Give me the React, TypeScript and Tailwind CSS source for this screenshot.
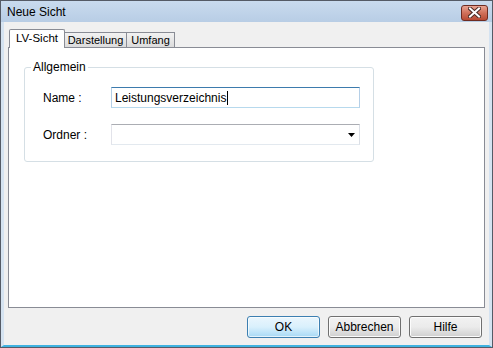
import React from "react";

const font = { fontFamily: "'Liberation Sans', Arial, sans-serif" };

function Btn({ label, def }: { label: string; def?: boolean }) {
  return (
    <div
      className={
        "w-[73px] h-[22px] rounded-[3px] border flex items-center justify-center text-[12px] text-black " +
        (def
          ? "border-[#3c7fb1] bg-gradient-to-b from-[#eaf6fd] via-[#d9f0fc] to-[#a7d9f5] shadow-[inset_0_0_0_1px_#ffffffaa]"
          : "border-[#707070] bg-gradient-to-b from-[#f2f2f2] via-[#ebebeb] to-[#cfcfcf] shadow-[inset_0_0_0_1px_#fcfcfc]")
      }
    >
      {label}
    </div>
  );
}

export default function App() {
  return (
    <div
      className="w-[493px] h-[348px] flex flex-col bg-[#f0f0f0] border border-[#555b66] overflow-hidden"
      style={font}
    >
      {/* title bar */}
      <div className="h-[21px] shrink-0 flex items-center justify-between pl-[6px] pr-[4px] bg-gradient-to-b from-[#c9dbee] to-[#b8cde5]">
        <span className="text-[12px] text-black">Neue Sicht</span>
        <div className="w-[27px] h-[16px] mt-[2px] rounded-[3px] border border-[#6d2c22] bg-gradient-to-b from-[#e8a493] via-[#d0705a] to-[#b84a34] flex items-center justify-center">
          <svg width="13" height="11" viewBox="0 0 13 11">
            <path d="M2 1.5 L11 9.5 M11 1.5 L2 9.5" stroke="#4a2a25" strokeWidth="4" strokeLinecap="square" />
            <path d="M2 1.5 L11 9.5 M11 1.5 L2 9.5" stroke="#ffffff" strokeWidth="2" strokeLinecap="square" />
          </svg>
        </div>
      </div>

      {/* client */}
      <div className="flex-1 flex flex-col border-l-[3px] border-r-[3px] border-b-[2px] border-l-[#d5e3f1] border-r-[#d5e3f1] border-b-[#3fb2e0] px-[4px]">
        {/* tabs */}
        <div className="flex items-end h-[25px] pl-[1px] pt-[7px]">
          <div className="relative z-10 w-[56px] h-[19px] -mb-[1px] bg-white border border-b-0 border-[#898c95] rounded-t-[2px] flex items-center justify-center text-[11.5px] text-black">
            LV-Sicht
          </div>
          <div className="w-[62px] h-[15px] bg-gradient-to-b from-[#f2f2f2] to-[#dcdcdc] border border-b-0 border-l-0 border-[#898c95] flex items-center justify-center text-[11px] text-black">
            Darstellung
          </div>
          <div className="w-[48px] h-[15px] bg-gradient-to-b from-[#f2f2f2] to-[#dcdcdc] border border-b-0 border-l-0 border-[#898c95] flex items-center justify-center text-[11px] text-black">
            Umfang
          </div>
        </div>
        {/* panel */}
        <div className="h-[261px] bg-white border border-[#898c95] pt-[19px] pl-[15px]">
          <div className="relative w-[350px] h-[95px] border border-[#d5dfe5] rounded-[3px] pt-[19px] pl-[18px]">
            <span className="absolute -top-[7px] left-[6px] bg-white px-[2px] text-[12px] text-black leading-[13px]">
              Allgemein
            </span>
            <div className="flex items-center h-[21px]">
              <span className="w-[68px] text-[12px] text-black">Name :</span>
              <div className="w-[249px] h-[21px] border border-[#3d7bad] border-b-[#b7d9ed] border-l-[#b5cfe7] border-r-[#b5cfe7] flex items-center pl-[3px] text-[12px] text-black">
                Leistungsverzeichnis<span className="inline-block w-[1px] h-[14px] bg-black ml-[1px]" />
              </div>
            </div>
            <div className="flex items-center h-[21px] mt-[16px]">
              <span className="w-[68px] text-[12px] text-black">Ordner :</span>
              <div className="w-[249px] h-[21px] border border-[#abadb3] border-b-[#e3e9ef] border-l-[#e2e3ea] border-r-[#dbdfe6] flex items-center justify-end pr-[4px]">
                <svg width="7" height="4" viewBox="0 0 7 4">
                  <path d="M0 0 H7 L3.5 4 Z" fill="#000" />
                </svg>
              </div>
            </div>
          </div>
        </div>
        {/* buttons */}
        <div className="flex-1 flex items-center justify-end gap-[8px] pr-[3px] pt-[1px]">
          <Btn label="OK" def />
          <Btn label="Abbrechen" />
          <Btn label="Hilfe" />
        </div>
      </div>
    </div>
  );
}
